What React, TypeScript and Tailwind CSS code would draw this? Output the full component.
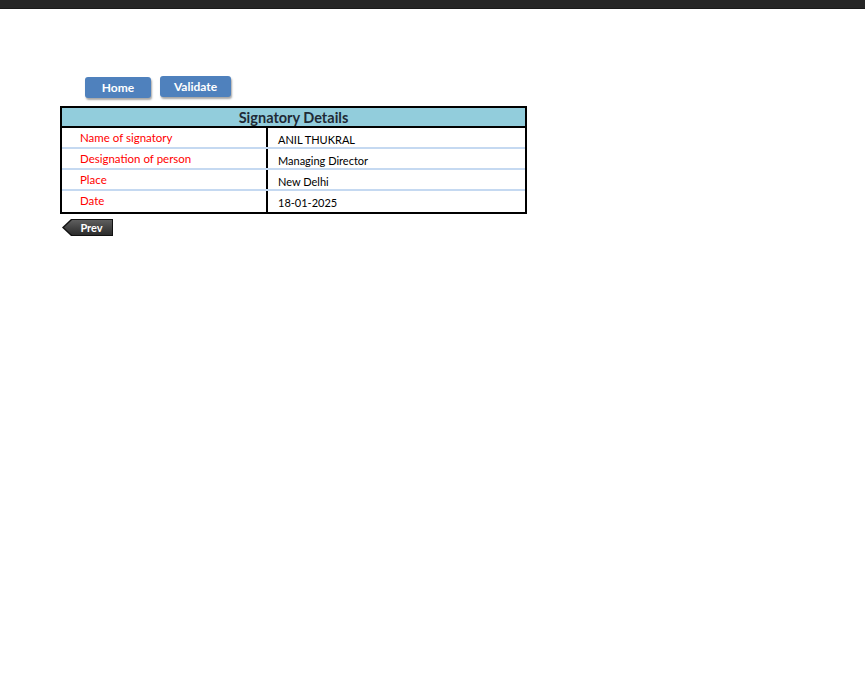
const ROWS = [
  { label: "Name of signatory", value: "ANIL THUKRAL" },
  { label: "Designation of person", value: "Managing Director" },
  { label: "Place", value: "New Delhi" },
  { label: "Date", value: "18-01-2025" },
];

export default function App() {
  return (
    <div className="min-h-[688px] w-[865px] bg-white font-['Lato','Liberation_Sans',sans-serif]">
      {/* top strip */}
      <div className="h-[9px] bg-[#262626] border-b border-[#1a1a1a]" />

      <div className="pl-[60px] pt-[67px]">
        {/* buttons */}
        <div className="flex items-start gap-[9px] pl-[25px]">
          <button className="mt-[1px] h-[21px] w-[66px] rounded-[3px] bg-[#4f81bd] text-[12px] font-bold text-white shadow-[1px_2px_2px_rgba(0,0,0,0.35)] leading-[21px]">
            Home
          </button>
          <button className="h-[21px] w-[71px] rounded-[3px] bg-[#4f81bd] text-[12px] font-bold text-white shadow-[1px_2px_2px_rgba(0,0,0,0.35)] leading-[19px]">
            Validate
          </button>
        </div>

        {/* table */}
        <div className="mt-[8px] w-[467px] border-2 border-black">
          <div className="h-[20px] bg-[#92cddc] text-center text-[14.5px] font-bold leading-[20px] text-[#1f2a36] border-b-2 border-black">
            Signatory Details
          </div>
          {ROWS.map((r, i) => (
            <div
              key={r.label}
              className={`flex h-[21px] ${i < ROWS.length - 1 ? "border-b-2 border-[#c5d9f1]" : ""}`}
            >
              <div className="w-[206px] border-r-2 border-black pl-[18px] text-[11.5px] leading-[19px] text-[#ff0000]">
                {r.label}
              </div>
              <div className="flex-1 pl-[10px] pt-[2px] text-[11px] leading-[19px] text-black">
                {r.value}
              </div>
            </div>
          ))}
        </div>

        {/* prev */}
        <div className="mt-[5px] flex pl-[2px]">
          <div className="h-[17px] w-[51px] bg-[#111] [clip-path:polygon(0_50%,9px_0,100%_0,100%_100%,9px_100%)] p-[1px] pl-[2px]">
            <button className="block h-full w-full bg-gradient-to-b from-[#5e5e5e] to-[#2c2c2c] pl-[7px] text-[11px] font-bold leading-[15px] text-white [clip-path:polygon(0_50%,8px_0,100%_0,100%_100%,8px_100%)]">
              Prev
            </button>
          </div>
        </div>
      </div>
    </div>
  );
}
